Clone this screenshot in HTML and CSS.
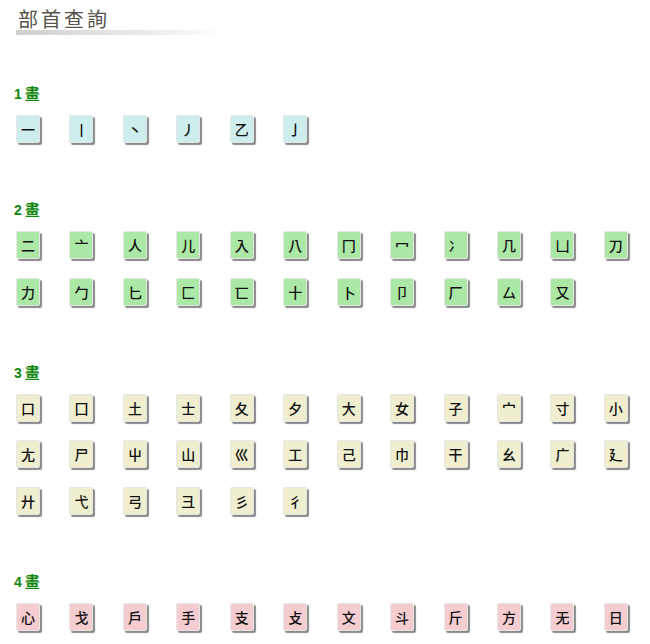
FILE: index.html
```html
<!DOCTYPE html>
<html lang="zh-Hant">
<head>
<meta charset="utf-8">
<title>部首查詢</title>
<link rel="stylesheet" href="styles.css">
</head>
<body>
<div class="page">
  <div class="title">部首查詢</div>

  <section class="section s1">
    <h2 class="stroke">1 <span class="hua">畫</span></h2>
    <div class="grid">
      <span class="rad">一</span><span class="rad">丨</span><span class="rad">丶</span><span class="rad">丿</span><span class="rad">乙</span><span class="rad">亅</span>
    </div>
  </section>

  <section class="section s2">
    <h2 class="stroke">2 <span class="hua">畫</span></h2>
    <div class="grid">
      <span class="rad">二</span><span class="rad">亠</span><span class="rad">人</span><span class="rad">儿</span><span class="rad">入</span><span class="rad">八</span><span class="rad">冂</span><span class="rad">冖</span><span class="rad">冫</span><span class="rad">几</span><span class="rad">凵</span><span class="rad">刀</span>
      <span class="rad">力</span><span class="rad">勹</span><span class="rad">匕</span><span class="rad">匚</span><span class="rad">匸</span><span class="rad">十</span><span class="rad">卜</span><span class="rad">卩</span><span class="rad">厂</span><span class="rad">厶</span><span class="rad">又</span>
    </div>
  </section>

  <section class="section s3">
    <h2 class="stroke">3 <span class="hua">畫</span></h2>
    <div class="grid">
      <span class="rad">口</span><span class="rad">囗</span><span class="rad">土</span><span class="rad">士</span><span class="rad">夂</span><span class="rad">夕</span><span class="rad">大</span><span class="rad">女</span><span class="rad">子</span><span class="rad">宀</span><span class="rad">寸</span><span class="rad">小</span>
      <span class="rad">尢</span><span class="rad">尸</span><span class="rad">屮</span><span class="rad">山</span><span class="rad">巛</span><span class="rad">工</span><span class="rad">己</span><span class="rad">巾</span><span class="rad">干</span><span class="rad">幺</span><span class="rad">广</span><span class="rad">廴</span>
      <span class="rad">廾</span><span class="rad">弋</span><span class="rad">弓</span><span class="rad">彐</span><span class="rad">彡</span><span class="rad">彳</span>
    </div>
  </section>

  <section class="section s4">
    <h2 class="stroke">4 <span class="hua">畫</span></h2>
    <div class="grid">
      <span class="rad">心</span><span class="rad">戈</span><span class="rad">戶</span><span class="rad">手</span><span class="rad">支</span><span class="rad">攴</span><span class="rad">文</span><span class="rad">斗</span><span class="rad">斤</span><span class="rad">方</span><span class="rad">无</span><span class="rad">日</span>
    </div>
  </section>
</div>
</body>
</html>
```

FILE: styles.css
```css
html, body {
  margin: 0;
  padding: 0;
  background: #ffffff;
}

body {
  font-family: "Noto Sans CJK TC", "Noto Sans CJK SC", sans-serif;
  overflow: hidden;
}

.page {
  padding-top: 6px;
}

.title {
  margin-left: 16px;
  width: 208px;
  height: 26px;
  padding-left: 2px;
  padding-bottom: 3px;
  font-size: 20px;
  line-height: 26px;
  letter-spacing: 3px;
  color: #55544c;
  background: linear-gradient(to right, #cfcfcf, #ececec 65%, #ffffff) left bottom / 100% 5px no-repeat;
}

.section {
  margin-bottom: 58px;
}

.s1 {
  margin-top: 50px;
}

.stroke {
  margin: 0 0 0 14px;
  height: 15px;
  font-family: "Liberation Sans", "Noto Sans CJK TC", sans-serif;
  font-size: 14px;
  line-height: 15px;
  font-weight: bold;
  color: #0f870f;
  word-spacing: -1px;
}

.hua {
  font-family: "Noto Sans CJK TC", sans-serif;
  font-size: 15px;
}

.grid {
  margin-top: 15px;
  margin-left: 16px;
  display: grid;
  grid-template-columns: repeat(12, 24px);
  grid-auto-rows: 28px;
  column-gap: 29.45px;
  row-gap: 18.5px;
}

.rad {
  display: flex;
  align-items: center;
  justify-content: center;
  width: 24px;
  height: 28px;
  box-sizing: border-box;
  border: 1px solid #e6e6e6;
  border-radius: 2px;
  box-shadow: 2px 2px 1px #8a8a8a;
  font-size: 14px;
  font-weight: 500;
  line-height: 1;
  color: #111;
}

.s1 .rad { background: #cdeeed; }
.s2 .rad { background: #abe7a5; }
.s3 .rad { background: #efeecf; }
.s4 .rad { background: #f5cdd1; }
```
